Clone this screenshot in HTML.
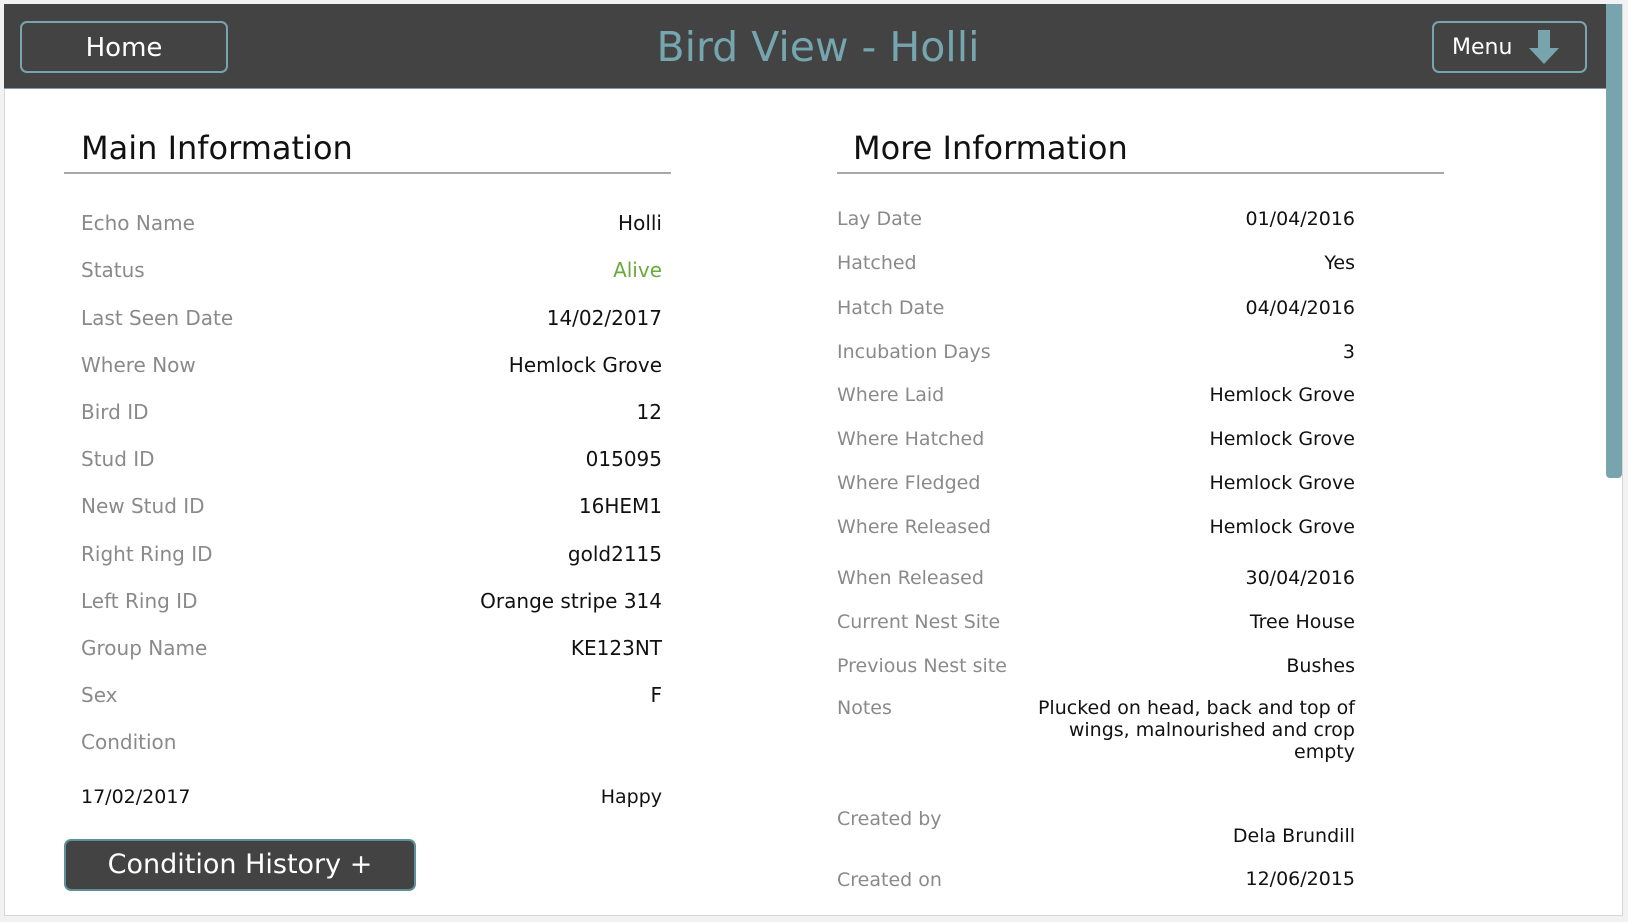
<!DOCTYPE html>
<html><head><meta charset="utf-8"><style>
*{margin:0;padding:0;box-sizing:border-box}
body{width:1628px;height:922px;background:#f2f2f2;font-family:"DejaVu Sans","Liberation Sans",sans-serif;position:relative;overflow:hidden}
#win{position:absolute;left:4px;top:4px;width:1619px;height:912px;background:#fff;border:1px solid #d6d6d6}
#hdr{position:absolute;left:4px;top:4px;width:1602px;height:85px;background:#434343;border-bottom:1px solid #7f9aa8}
.btn{position:absolute;border:2px solid #77a5ad;border-radius:7px;color:#fff}
#scroll{position:absolute;left:1606px;top:4px;width:16px;height:474px;background:#78a5ad;border-radius:0 0 4px 4px}
.t{position:absolute;white-space:nowrap}
.l{color:#8a8a8a;font-size:20px}
.v{color:#111;font-size:20px;text-align:right}
h2{position:absolute;font-weight:normal;font-size:32px;color:#111}
.hr{position:absolute;height:2px;background:#a8a8a8}
</style></head><body>
<div id="win"></div>
<div id="hdr"></div>
<div id="scroll"></div>
<div class="btn" style="left:20px;top:21px;width:208px;height:52px;font-size:26px;text-align:center;line-height:50px">Home</div>
<div class="t" style="left:0;width:1636px;top:19px;text-align:center;font-size:41px;color:#75a5ae;line-height:56px">Bird View - Holli</div>
<div class="btn" style="left:1432px;top:21px;width:155px;height:52px;font-size:22px;line-height:50px;padding-left:18px">Menu
<svg style="position:absolute;left:94px;top:7px" width="32" height="36" viewBox="0 0 32 36"><path d="M10 0H22V18H31L16 34L1 18H10Z" fill="#78a5ad"/></svg></div>

<h2 style="left:81px;top:129px">Main Information</h2>
<div class="hr" style="left:64px;top:172px;width:607px"></div>
<h2 style="left:853px;top:129px">More Information</h2>
<div class="hr" style="left:837px;top:172px;width:607px"></div>

<div style="position:absolute;left:81px;top:0;width:581px">
<div class="t l" style="top:211px">Echo Name</div><div class="t v" style="top:211px;right:0">Holli</div>
<div class="t l" style="top:258px">Status</div><div class="t v" style="top:258px;right:0;color:#6aaa3a">Alive</div>
<div class="t l" style="top:306px">Last Seen Date</div><div class="t v" style="top:306px;right:0">14/02/2017</div>
<div class="t l" style="top:353px">Where Now</div><div class="t v" style="top:353px;right:0">Hemlock Grove</div>
<div class="t l" style="top:400px">Bird ID</div><div class="t v" style="top:400px;right:0">12</div>
<div class="t l" style="top:447px">Stud ID</div><div class="t v" style="top:447px;right:0">015095</div>
<div class="t l" style="top:494px">New Stud ID</div><div class="t v" style="top:494px;right:0">16HEM1</div>
<div class="t l" style="top:542px">Right Ring ID</div><div class="t v" style="top:542px;right:0">gold2115</div>
<div class="t l" style="top:589px">Left Ring ID</div><div class="t v" style="top:589px;right:0">Orange stripe 314</div>
<div class="t l" style="top:636px">Group Name</div><div class="t v" style="top:636px;right:0">KE123NT</div>
<div class="t l" style="top:683px">Sex</div><div class="t v" style="top:683px;right:0">F</div>
<div class="t l" style="top:730px">Condition</div>
<div class="t" style="top:786px;font-size:19px;color:#111">17/02/2017</div><div class="t v" style="top:786px;right:0;font-size:19px">Happy</div>
</div>
<div class="btn" style="left:64px;top:839px;width:352px;height:52px;background:#434343;font-size:27px;line-height:48px;text-align:center;border-color:#5f8f97">Condition History +</div>

<div style="position:absolute;left:837px;top:0;width:518px;font-size:19px">
<div class="t l" style="top:208px;font-size:19px">Lay Date</div><div class="t v" style="top:208px;right:0;font-size:19px">01/04/2016</div>
<div class="t l" style="top:252px;font-size:19px">Hatched</div><div class="t v" style="top:252px;right:0;font-size:19px">Yes</div>
<div class="t l" style="top:297px;font-size:19px">Hatch Date</div><div class="t v" style="top:297px;right:0;font-size:19px">04/04/2016</div>
<div class="t l" style="top:341px;font-size:19px">Incubation Days</div><div class="t v" style="top:341px;right:0;font-size:19px">3</div>
<div class="t l" style="top:384px;font-size:19px">Where Laid</div><div class="t v" style="top:384px;right:0;font-size:19px">Hemlock Grove</div>
<div class="t l" style="top:428px;font-size:19px">Where Hatched</div><div class="t v" style="top:428px;right:0;font-size:19px">Hemlock Grove</div>
<div class="t l" style="top:472px;font-size:19px">Where Fledged</div><div class="t v" style="top:472px;right:0;font-size:19px">Hemlock Grove</div>
<div class="t l" style="top:516px;font-size:19px">Where Released</div><div class="t v" style="top:516px;right:0;font-size:19px">Hemlock Grove</div>
<div class="t l" style="top:567px;font-size:19px">When Released</div><div class="t v" style="top:567px;right:0;font-size:19px">30/04/2016</div>
<div class="t l" style="top:611px;font-size:19px">Current Nest Site</div><div class="t v" style="top:611px;right:0;font-size:19px">Tree House</div>
<div class="t l" style="top:655px;font-size:19px">Previous Nest site</div><div class="t v" style="top:655px;right:0;font-size:19px">Bushes</div>
<div class="t l" style="top:697px;font-size:19px">Notes</div><div class="t v" style="top:697px;right:0;font-size:19px;line-height:22px">Plucked on head, back and top of<br>wings, malnourished and crop<br>empty</div>
<div class="t l" style="top:808px;font-size:19px">Created by</div><div class="t v" style="top:825px;right:0;font-size:19px">Dela Brundill</div>
<div class="t l" style="top:869px;font-size:19px">Created on</div><div class="t v" style="top:868px;right:0;font-size:19px">12/06/2015</div>
</div>
</body></html>
